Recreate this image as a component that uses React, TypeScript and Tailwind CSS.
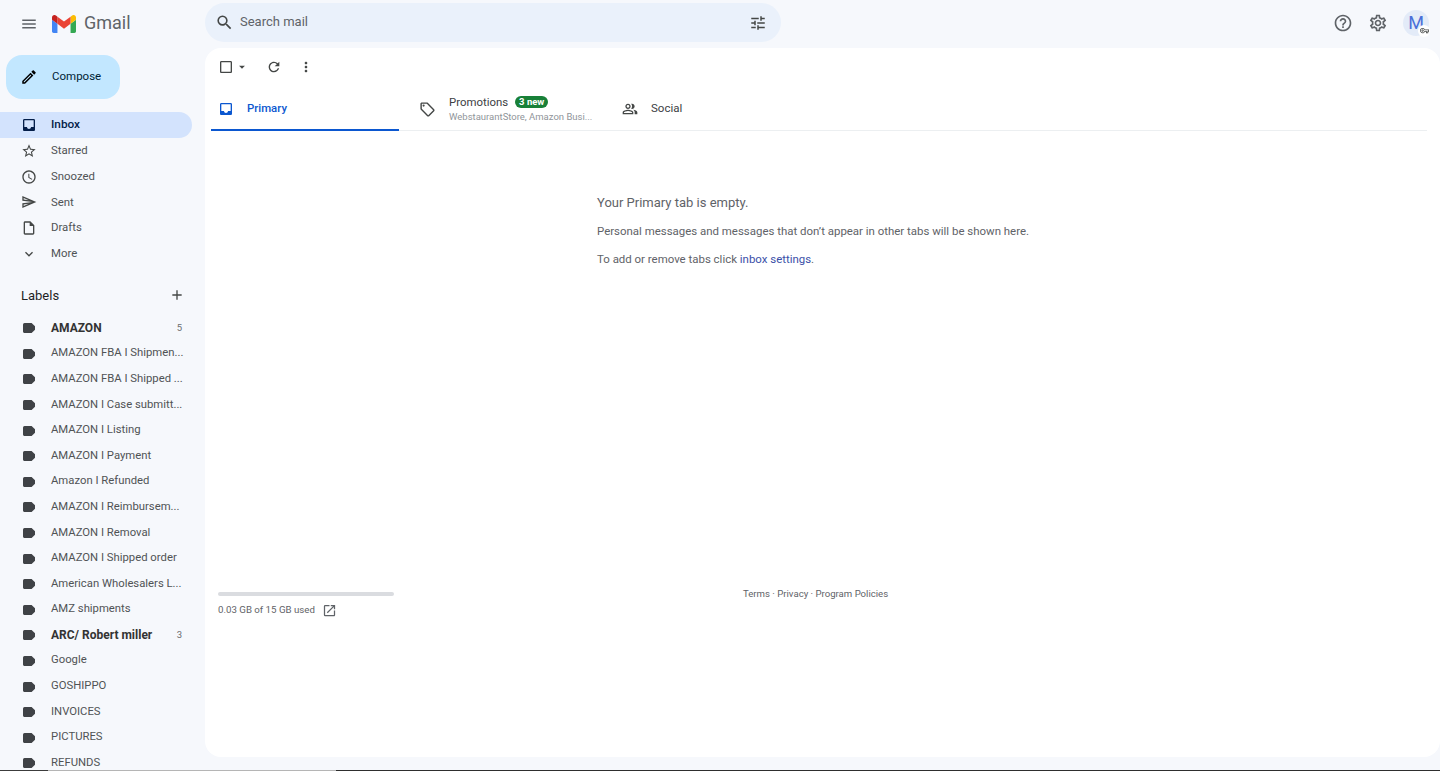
import React from "react";
import {
  MdMenu, MdSearch, MdTune, MdHelpOutline, MdOutlineSettings, MdInbox, MdStarBorder, MdAccessTime,
  MdOutlineSend, MdOutlineInsertDriveFile, MdExpandMore, MdAdd, MdCheckBoxOutlineBlank,
  MdArrowDropDown, MdRefresh, MdMoreVert, MdOutlineLocalOffer, MdOutlinePeopleAlt, MdOpenInNew, MdOutlineVpnKey, MdOutlineEdit,
} from "react-icons/md";

const nav = [
  { name: "Starred", Icon: MdStarBorder },
  { name: "Snoozed", Icon: MdAccessTime },
  { name: "Sent", Icon: MdOutlineSend },
  { name: "Drafts", Icon: MdOutlineInsertDriveFile },
  { name: "More", Icon: MdExpandMore },
];

const labels: { name: string; count?: number }[] = [
  { name: "AMAZON", count: 5 },
  { name: "AMAZON FBA I Shipmen..." },
  { name: "AMAZON FBA I Shipped ..." },
  { name: "AMAZON I Case submitt..." },
  { name: "AMAZON I Listing" },
  { name: "AMAZON I Payment" },
  { name: "Amazon I Refunded" },
  { name: "AMAZON I Reimbursem..." },
  { name: "AMAZON I Removal" },
  { name: "AMAZON I Shipped order" },
  { name: "American Wholesalers L..." },
  { name: "AMZ shipments" },
  { name: "ARC/ Robert miller", count: 3 },
  { name: "Google" },
  { name: "GOSHIPPO" },
  { name: "INVOICES" },
  { name: "PICTURES" },
  { name: "REFUNDS" },
];

function GmailLogo() {
  return (
    <svg viewBox="52 42 88 66" className="w-6 h-[18px]">
      <path fill="#4285f4" d="M58 108h14V74L52 59v43c0 3.32 2.69 6 6 6" />
      <path fill="#34a853" d="M120 108h14c3.32 0 6-2.69 6-6V59l-20 15" />
      <path fill="#fbbc04" d="M120 48v26l20-15v-8c0-7.42-8.47-11.65-14.4-7.2" />
      <path fill="#ea4335" d="M72 74V48l24 18 24-18v26L96 92" />
      <path fill="#c5221f" d="M52 51v8l20 15V48l-5.6-4.2c-5.94-4.45-14.4-.22-14.4 7.2" />
    </svg>
  );
}

function LabelIcon() {
  return (
    <svg viewBox="0 0 12 10" className="w-[12px] h-[10px] shrink-0">
      <path fill="#3f4246" d="M1.5 0H8.6L12 3.2V6.8L8.6 10H1.5C.7 10 0 9.2 0 8.4V1.6C0 .8 .7 0 1.5 0Z" />
    </svg>
  );
}

export default function App() {
  return (
    <div className="relative w-[1440px] h-[771px] overflow-hidden bg-[#f6f8fc] font-['Roboto',sans-serif] text-[#505355] flex flex-col">
      <div className="flex flex-1 min-h-0">
        {/* Sidebar */}
        <aside className="w-[205px] shrink-0 flex flex-col overflow-hidden">
          <div className="h-[48px] shrink-0 flex items-center pl-[20px]">
            <MdMenu className="w-[18px] h-[18px] text-[#5f6368]" />
            <div className="ml-[14px]"><GmailLogo /></div>
            <span className="ml-[8px] -mt-[2px] text-[18px] leading-none text-[#5f6368]">Gmail</span>
          </div>
          <button className="ml-[6px] mt-[7px] w-[114px] h-[44px] shrink-0 rounded-[16px] bg-[#c2e7ff] flex items-center text-[#001d35] pl-[14px]">
            <MdOutlineEdit className="w-[18px] h-[18px] text-black" />
            <span className="ml-[14px] text-[11.5px]">Compose</span>
          </button>
          <nav className="mt-[13px] shrink-0">
            <div className="w-[192px] h-[26px] rounded-r-full bg-[#d3e3fd] flex items-center pl-[21px] text-[#041e49]">
              <MdInbox className="w-[16px] h-[16px] text-[#041e49]" />
              <span className="ml-[14px] text-[11.8px] font-medium">Inbox</span>
            </div>
            {nav.map(({ name, Icon }) => (
              <div key={name} className="h-[25.7px] flex items-center pl-[21px]">
                <Icon className="w-[16px] h-[16px] text-[#444746]" />
                <span className="ml-[14px] text-[11.4px]">{name}</span>
              </div>
            ))}
          </nav>
          <div className="mt-[16px] h-[26px] shrink-0 pl-[21px] pr-[20px] flex items-center justify-between">
            <span className="text-[13px] text-[#1f1f1f]">Labels</span>
            <MdAdd className="w-[16px] h-[16px] text-[#444746]" />
          </div>
          <ul className="mt-[7px] shrink-0">
            {labels.map((l) => (
              <li key={l.name} className="h-[25.6px] flex items-center pl-[23px] pr-[23px]">
                <LabelIcon />
                <span className={`ml-[16px] whitespace-nowrap ${l.count ? "text-[12px] font-bold text-[#333]" : "text-[11.3px]"}`}>{l.name}</span>
                {l.count ? <span className="ml-auto text-[9.5px] text-[#6b6e70]">{l.count}</span> : null}
              </li>
            ))}
          </ul>
        </aside>

        {/* Right column */}
        <div className="flex-1 min-w-0 flex flex-col">
          <header className="h-[48px] shrink-0 flex items-center">
            <div className="w-[576px] h-[39px] -mt-[3px] rounded-full bg-[#eaf1fb] flex items-center pl-[10px] pr-[14px]">
              <MdSearch className="w-[19px] h-[19px] text-[#444746]" />
              <span className="ml-[6px] -mt-[2px] text-[13px] text-[#5f6368]">Search mail</span>
              <MdTune className="ml-auto w-[18px] h-[18px] text-[#444746]" />
            </div>
            <div className="ml-auto flex items-center pr-[11px] -mt-[3px]">
              <MdHelpOutline className="w-[20px] h-[20px] text-[#5f6368]" />
              <MdOutlineSettings className="ml-[15px] w-[20px] h-[20px] text-[#5f6368]" />
              <div className="relative ml-[15px] w-[26px] h-[26px] rounded-full bg-[#e3ebf8] flex items-center justify-center text-[#4a6fd8] text-[18px]">
                M
                <span className="absolute -right-[1px] -bottom-[1px] w-[12px] h-[12px] rounded-full bg-white flex items-center justify-center">
                  <MdOutlineVpnKey className="w-[9px] h-[9px] text-[#444746]" />
                </span>
              </div>
            </div>
          </header>

          <main className="flex-1 min-h-0 mb-[13px] bg-white rounded-[16px] flex flex-col">
            <div className="h-[38px] shrink-0 flex items-center pl-[13px] text-[#444746]">
              <MdCheckBoxOutlineBlank className="w-[16px] h-[16px]" />
              <MdArrowDropDown className="w-[14px] h-[14px] ml-[1px]" />
              <MdRefresh className="ml-[17px] w-[16px] h-[16px]" />
              <MdMoreVert className="ml-[16px] w-[16px] h-[16px]" />
            </div>
            <div className="ml-[6px] mr-[13px] h-[45px] shrink-0 flex border-b border-[#eceff1]">
              <div className="w-[188px] h-[45px] border-b-2 border-[#0b57d0] flex items-center pl-[7px] pt-[2px] text-[#0b57d0]">
                <MdInbox className="w-[16px] h-[16px]" />
                <span className="ml-[13px] text-[11.4px] font-medium">Primary</span>
              </div>
              <div className="w-[212px] flex items-center pl-[20px] pt-[2px]">
                <MdOutlineLocalOffer className="w-[17px] h-[17px] text-[#444746]" />
                <div className="ml-[13px] mt-[1px]">
                  <div className="flex items-center h-[15px]">
                    <span className="text-[11.4px] text-[#3c4043]">Promotions</span>
                    <span className="ml-[7px] h-[12px] px-[4px] rounded-full bg-[#188038] text-white text-[9.5px] font-bold leading-[12px]">3 new</span>
                  </div>
                  <div className="text-[9.5px] whitespace-nowrap text-[#90959a]">WebstaurantStore, Amazon Busi...</div>
                </div>
              </div>
              <div className="flex items-center pl-[11px] pt-[2px]">
                <MdOutlinePeopleAlt className="w-[16px] h-[16px] text-[#444746]" />
                <span className="ml-[13px] text-[11.5px] text-[#3c4043]">Social</span>
              </div>
            </div>

            <div className="ml-[392px] mt-[64px] text-[#5f6368]">
              <p className="text-[13px] leading-[16px]">Your Primary tab is empty.</p>
              <p className="mt-[13px] text-[11.45px] leading-[14px]">Personal messages and messages that don’t appear in other tabs will be shown here.</p>
              <p className="mt-[14px] text-[11.45px] leading-[14px]">To add or remove tabs click <span className="text-[#3b4fa8]">inbox settings</span>.</p>
            </div>

            <div className="mt-[326px] flex items-start pl-[13px]">
              <div className="w-[176px]">
                <div className="h-[4px] rounded-full bg-[#dadce0]" />
                <div className="mt-[7px] flex items-center text-[9.7px] text-[#5f6368]">
                  <span>0.03 GB of 15 GB used</span>
                  <MdOpenInNew className="ml-[7px] w-[15px] h-[15px] text-[#5f6368]" />
                </div>
              </div>
              <div className="ml-[349px] -mt-[5px] text-[9.6px] text-[#5f6368] whitespace-nowrap">Terms · Privacy · Program Policies</div>
            </div>
          </main>
        </div>
      </div>
      <div className="h-[1px] shrink-0 flex">
        <div className="w-[48px] bg-[#3c3c3c]" />
        <div className="w-[288px] bg-[#b5b5b5]" />
        <div className="flex-1 bg-[#2e2e2e]" />
      </div>
    </div>
  );
}
